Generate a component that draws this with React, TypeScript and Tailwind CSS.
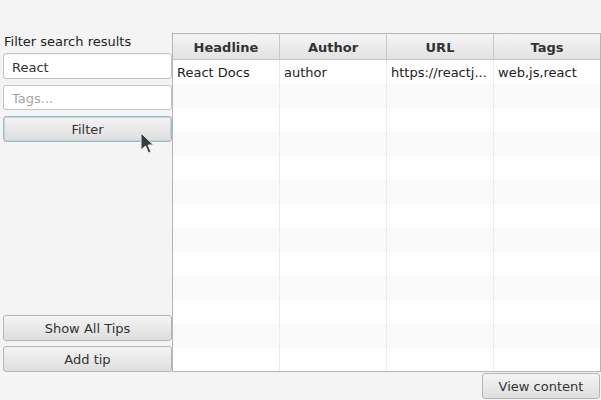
import React from "react";

const font = { fontFamily: '"DejaVu Sans", "Liberation Sans", sans-serif' };

const rows = [
  { headline: "React Docs", author: "author", url: "https://reactj...", tags: "web,js,react" },
];

const btn =
  "flex items-center justify-center pt-[2px] rounded-[3px] border border-[#b5b5b5] bg-gradient-to-b from-[#f4f4f4] to-[#dedede] text-[13px] text-[#333]";

function Cursor() {
  return (
    <svg className="absolute left-[140px] top-[132px]" width="15" height="23" viewBox="0 0 15 23">
      <path d="M1 1 L1 18 L5.5 14 L8.5 21 L11 20 L8 13 L13.5 13 Z" fill="#3c3c3c" stroke="#f0f0f0" strokeWidth="1" />
    </svg>
  );
}

export default function App() {
  const cols = "grid grid-cols-[107px_107px_107px_1fr]";
  const total = 13;
  return (
    <div style={font} className="relative w-[601px] h-[400px] bg-[#f4f4f4] flex flex-col text-[#333] overflow-hidden">
      <div className="flex mt-[33px] h-[339px]">
        <div className="w-[172px] flex flex-col pl-[3px] pr-0">
          <div className="h-[16px] leading-[16px] pt-[1px] pl-[1px] text-[13px] text-[#222]">Filter search results</div>
          <div className="mt-[4px] h-[26px] w-[169px] rounded-[3px] border border-[#c2c2c2] bg-white flex items-center pl-[8px] pt-[3px] text-[13px] shadow-[inset_0_1px_1px_rgba(0,0,0,0.06)]">
            React
          </div>
          <div className="mt-[6px] h-[25px] w-[169px] rounded-[3px] border border-[#c2c2c2] bg-white flex items-center pl-[8px] pt-[2px] text-[13px] text-[#a3a3a3]">
            Tags...
          </div>
          <div className={`${btn} mt-[6px] h-[26px] w-[169px] border-[#039ed3] shadow-[inset_0_0_0_1px_#a6dcef]`}>Filter</div>
          <div className="flex-1" />
          <div className={`${btn} h-[26px] w-[169px]`}>Show All Tips</div>
          <div className={`${btn} mt-[5px] h-[26px] w-[169px]`}>Add tip</div>
        </div>
        <div className="flex-1 border border-[#b5b5b5] bg-white flex flex-col overflow-hidden">
          <div className={`${cols} h-[26px] shrink-0 bg-gradient-to-b from-[#f5f5f5] to-[#e2e2e2] border-b border-[#c4c4c4] text-[13px] font-bold text-[#333]`}>
            {["Headline", "Author", "URL", "Tags"].map((h, i) => (
              <div key={h} className={`flex items-center justify-center pt-[3px] ${i < 3 ? "border-r border-[#c8c8c8]" : ""}`}>
                {h}
              </div>
            ))}
          </div>
          {Array.from({ length: total }).map((_, r) => {
            const d = rows[r];
            const cells = d ? [d.headline, d.author, d.url, d.tags] : ["", "", "", ""];
            return (
              <div key={r} className={`${cols} h-[24px] shrink-0 ${r % 2 === 0 ? "bg-white" : "bg-[#f9f9f9]"} text-[13px] text-[#222]`}>
                {cells.map((c, i) => (
                  <div key={i} className={`flex items-center pl-[4px] pt-[2px] whitespace-nowrap overflow-hidden ${i < 3 ? "border-r border-[#ececec]" : ""}`}>
                    {c}
                  </div>
                ))}
              </div>
            );
          })}
        </div>
      </div>
      <div className="flex justify-end pr-[1px] mt-[1px]">
        <div className={`${btn} h-[26px] w-[118px]`}>View content</div>
      </div>
      <Cursor />
    </div>
  );
}
